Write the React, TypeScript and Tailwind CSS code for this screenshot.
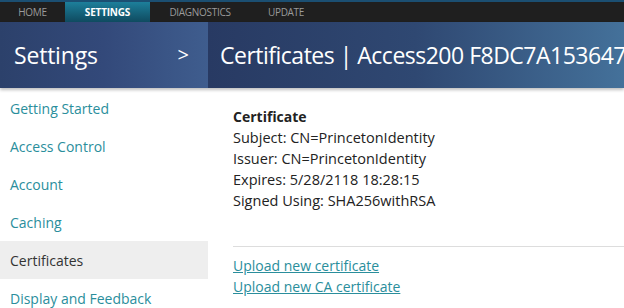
import React from 'react'

const NAV = ['Getting Started', 'Access Control', 'Account', 'Caching', 'Certificates', 'Display and Feedback']
const TABS: [string, string][] = [
  ['HOME', 'w-[65px]'],
  ['SETTINGS', 'w-[85px]'],
  ['DIAGNOSTICS', 'w-[100px]'],
  ['UPDATE', 'w-[72px]'],
]

function TopTabs() {
  return (
    <div className="flex h-[22px] border-t-2 border-[#1b4f72] bg-[#1f1f1f]">
      {TABS.map(([t, w]) => {
        const active = t === 'SETTINGS'
        return (
          <div
            key={t}
            className={
              active
                ? `${w} flex items-center justify-center bg-gradient-to-b from-[#1d7f9b] to-[#0f4b60] text-[10px] font-bold tracking-[-0.2px] text-white`
                : `${w} flex items-center justify-center text-[10px] tracking-[-0.3px] text-[#9a9a9a]`
            }
          >
            {t}
          </div>
        )
      })}
      <div className="flex-1" />
    </div>
  )
}

export default function App() {
  return (
    <div className="h-[308px] w-[624px] overflow-hidden bg-white font-['Open_Sans',sans-serif]">
      <TopTabs />
      <div className="flex h-[66px] shadow-[0_2px_3px_rgba(0,0,0,0.25)]">
        <div className="flex w-[208px] shrink-0 items-center justify-between bg-gradient-to-r from-[#2c416b] via-[#33497a] to-[#3f5d8e] pl-[14px] pr-[19px] text-white">
          <span className="text-[23px] tracking-[-0.2px]">Settings</span>
          <span className="text-[20px]">&gt;</span>
        </div>
        <div className="flex min-w-0 flex-1 items-center bg-gradient-to-r from-[#283a63] via-[#2f4872] to-[#44719a] pl-[12px] text-white">
          <span className="whitespace-nowrap text-[23px] tracking-[-0.5px]">Certificates | Access200 F8DC7A153647</span>
        </div>
      </div>
      <div className="flex">
        <ul className="w-[208px] shrink-0 pt-[1px]">
          {NAV.map((n) => (
            <li
              key={n}
              className={
                n === 'Certificates'
                  ? 'flex h-[38px] items-center bg-[#eeeeee] pl-[10px] text-[14px] text-[#333]'
                  : 'flex h-[38px] items-center pl-[10px] text-[14px] text-[#2a8e9c]'
              }
            >
              {n}
            </li>
          ))}
        </ul>
        <div className="flex-1 pl-[25px] pt-[18px] text-[14.5px] text-[#222]">
          <div className="text-[14px] font-bold leading-[21px]">Certificate</div>
          <div className="leading-[21px]">Subject: CN=PrincetonIdentity</div>
          <div className="leading-[21px]">Issuer: CN=PrincetonIdentity</div>
          <div className="leading-[21px]">Expires: 5/28/2118 18:28:15</div>
          <div className="leading-[21px]">Signed Using: SHA256withRSA</div>
          <div className="mt-[35px] border-t border-[#dddddd] pt-[8px] text-[14px]">
            <a href="#" className="block leading-[21px] text-[#2a8e9c] underline">Upload new certificate</a>
            <a href="#" className="block leading-[21px] text-[#2a8e9c] underline">Upload new CA certificate</a>
          </div>
        </div>
      </div>
    </div>
  )
}
